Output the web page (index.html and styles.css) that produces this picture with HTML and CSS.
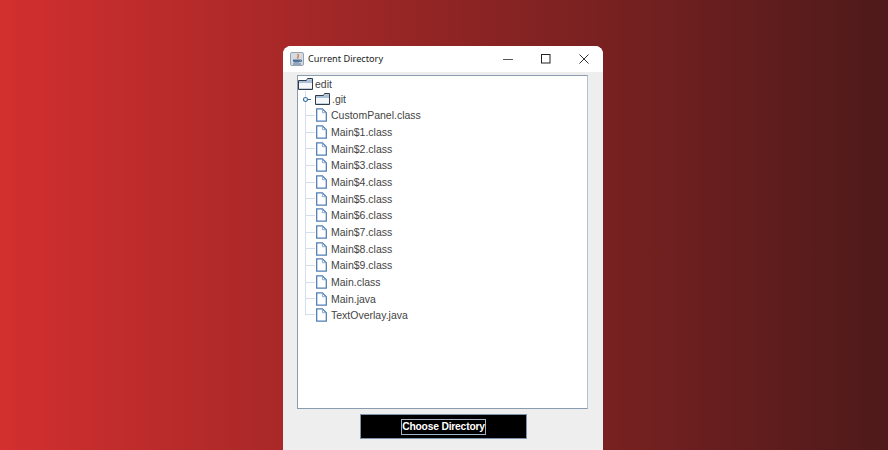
FILE: index.html
```html
<!DOCTYPE html>
<html>
  <head>
    <meta charset="utf-8">
    <title>Current Directory</title>
    <link rel="stylesheet" href="styles.css">
  </head>
  <body>
    <svg class="defs" width="0" height="0">
      <symbol id="folder" viewBox="0 0 15 12">
        <path d="M.5 3V2.5H8.5L9.5 .5H14.5V11.5H.5Z" fill="#f4f6f9" stroke="#2f3b49"/>
        <path d="M1 3H9L10 1.2H14V5H1Z" fill="#a9c0d8"/>
        <path d="M1 10.5H14" stroke="#c3d0de"/>
      </symbol>
      <symbol id="file" viewBox="0 0 12 15">
        <path d="M.75 .75H7L11.25 5V14.25H.75Z" fill="#fff" stroke="#4f7fb5" stroke-width="1.4"/>
        <path d="M7 .75V5H11.25" fill="none" stroke="#7fa2c8" stroke-width="1"/>
      </symbol>
    </svg>

    <main class="window">
      <header class="titlebar">
        <svg class="app-icon" width="14" height="14" viewBox="0 0 14 14">
          <rect x=".5" y=".5" width="13" height="13" rx="1.5" fill="#d5dbe2" stroke="#9aa4ae"/>
          <path d="M7.5 2Q9.5 4 7 6M8.5 4Q7.5 5 8 6.5" fill="none" stroke="#e0762f" stroke-width="1.3"/>
          <path d="M3 7.5H10V9Q10 10.5 8 10.5H5Q3 10.5 3 9Z" fill="#4f7298"/>
          <path d="M10 8H11.5V9.5H10M3 12H11" fill="none" stroke="#4f7298"/>
        </svg>
        <span class="window-title">Current Directory</span>
        <div class="window-controls">
          <svg width="10" height="10" viewBox="0 0 10 10"><path d="M0 5.5H10" stroke="#555"/></svg>
          <svg width="10" height="10" viewBox="0 0 10 10"><rect x=".5" y=".5" width="8.5" height="8.5" fill="none" stroke="#222"/></svg>
          <svg width="10" height="10" viewBox="0 0 10 10"><path d="M.5 .5L9.5 9.5M9.5 .5L.5 9.5" stroke="#333"/></svg>
        </div>
      </header>

      <div class="content">
        <div class="tree">
          <div class="tree-root">
            <svg class="folder-icon"><use href="#folder"/></svg>
            <span>edit</span>
          </div>
          <ul class="tree-children">
            <li class="tree-row folder-row">
              <svg class="handle" width="8" height="7" viewBox="0 0 8 7">
                <circle cx="2.5" cy="3.5" r="2" fill="#fff" stroke="#3a6ea5" stroke-width="1.2"/>
                <path d="M4.5 3.5H8" stroke="#3a6ea5"/>
              </svg>
              <svg class="folder-icon"><use href="#folder"/></svg>
              <span>.git</span>
            </li>
            <li class="tree-row"><svg class="file-icon"><use href="#file"/></svg><span>CustomPanel.class</span></li>
            <li class="tree-row"><svg class="file-icon"><use href="#file"/></svg><span>Main$1.class</span></li>
            <li class="tree-row"><svg class="file-icon"><use href="#file"/></svg><span>Main$2.class</span></li>
            <li class="tree-row"><svg class="file-icon"><use href="#file"/></svg><span>Main$3.class</span></li>
            <li class="tree-row"><svg class="file-icon"><use href="#file"/></svg><span>Main$4.class</span></li>
            <li class="tree-row"><svg class="file-icon"><use href="#file"/></svg><span>Main$5.class</span></li>
            <li class="tree-row"><svg class="file-icon"><use href="#file"/></svg><span>Main$6.class</span></li>
            <li class="tree-row"><svg class="file-icon"><use href="#file"/></svg><span>Main$7.class</span></li>
            <li class="tree-row"><svg class="file-icon"><use href="#file"/></svg><span>Main$8.class</span></li>
            <li class="tree-row"><svg class="file-icon"><use href="#file"/></svg><span>Main$9.class</span></li>
            <li class="tree-row"><svg class="file-icon"><use href="#file"/></svg><span>Main.class</span></li>
            <li class="tree-row"><svg class="file-icon"><use href="#file"/></svg><span>Main.java</span></li>
            <li class="tree-row last-row"><svg class="file-icon"><use href="#file"/></svg><span>TextOverlay.java</span></li>
          </ul>
        </div>
        <button class="choose-btn" type="button"><span>Choose Directory</span></button>
      </div>
    </main>
  </body>
</html>
```

FILE: styles.css
```css
html,
body {
  height: 100%;
}

body {
  margin: 0;
  overflow: hidden;
  font-family: "Liberation Sans", Arial, sans-serif;
  background: linear-gradient(to right, #d32f2f, #4e1a1a);
}

.defs {
  position: absolute;
}

.window {
  width: 320px;
  height: 404px;
  margin: 46px 0 0 283px;
  background: #eeeeee;
  border-radius: 8px 8px 0 0;
  overflow: hidden;
}

.titlebar {
  height: 26px;
  background: #fff;
  display: flex;
  align-items: center;
  padding-left: 7px;
}

.app-icon {
  margin-right: 4px;
}

.window-title {
  font-family: "Noto Sans", sans-serif;
  font-size: 9.2px;
  line-height: 12px;
  margin-bottom: 1px;
  color: #222;
  flex: 1;
}

.window-controls {
  display: flex;
  gap: 28px;
  padding-right: 14px;
}

.content {
  padding: 3px 15px 0 14px;
  display: flex;
  flex-direction: column;
}

.tree {
  width: 291px;
  height: 334px;
  box-sizing: border-box;
  background: #fff;
  border: 1px solid #8a9bb0;
  border-right-color: #b4c1cf;
  font-size: 10.5px;
  color: #444;
}

.tree-root {
  height: 15px;
  display: flex;
  align-items: center;
  gap: 2px;
}

.tree-children {
  list-style: none;
  margin: 0 0 0 7px;
  padding: 0;
}

.tree-row {
  height: 16.68px;
  display: flex;
  align-items: center;
  gap: 3px;
  padding-left: 11px;
  position: relative;
}

.folder-row {
  height: 16px;
  padding-left: 10px;
  gap: 2px;
}

/* connector lines of the tree */
.tree-row::before {
  content: "";
  position: absolute;
  left: 0;
  top: 0;
  bottom: 0;
  width: 9px;
  border-left: 1px solid #d3deea;
  background: linear-gradient(#d3deea, #d3deea) no-repeat 0 50% / 100% 1px;
}

.last-row::before {
  bottom: 50%;
  background-position: 0 100%;
}

.folder-row::before {
  background: none;
}

.handle {
  position: absolute;
  left: -2px;
  top: 5px;
}

.folder-icon {
  width: 15px;
  height: 12px;
  flex: none;
}

.file-icon {
  width: 11px;
  height: 14px;
  flex: none;
  margin-right: 1px;
}

.choose-btn {
  margin: 5px 0 0 63px;
  width: 167px;
  height: 25px;
  padding: 0;
  background: #000;
  border: 1px solid #7f93aa;
  display: flex;
  align-items: center;
  justify-content: center;
  font-family: "Liberation Sans", Arial, sans-serif;
  font-size: 10.3px;
  letter-spacing: -0.2px;
  font-weight: bold;
  color: #fff;
}

.choose-btn span {
  border: 1px solid #a5b5c7;
  line-height: 14px;
}
```
